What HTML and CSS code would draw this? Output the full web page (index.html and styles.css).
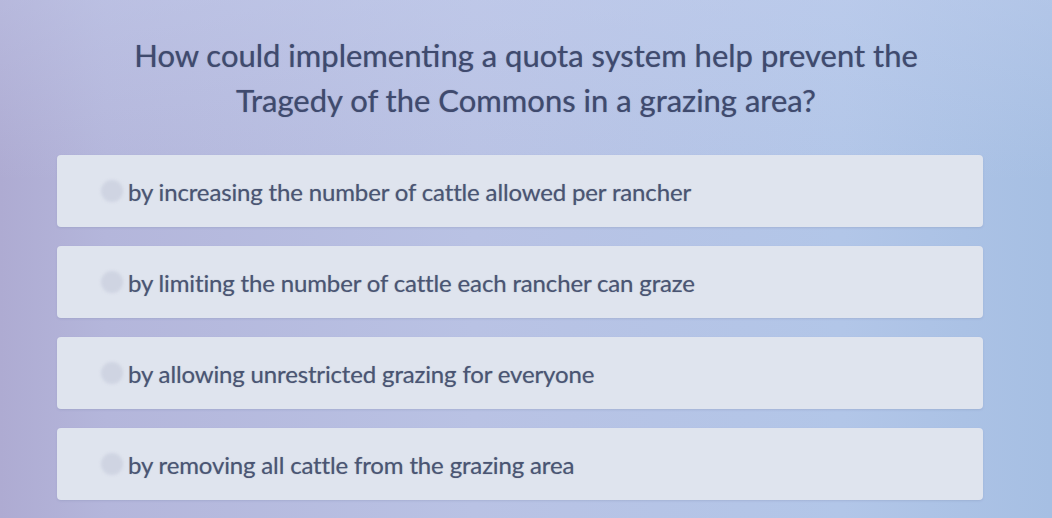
FILE: index.html
```html
<!DOCTYPE html>
<html>
<head>
<meta charset="utf-8">
<link rel="stylesheet" href="styles.css">
</head>
<body>
<div class="page">
  <h1 class="question">How could implementing a quota system help prevent the<br>Tragedy of the Commons in a grazing area?</h1>
  <div class="options">
    <div class="option"><span class="radio"></span><span class="label">by increasing the number of cattle allowed per rancher</span></div>
    <div class="option"><span class="radio"></span><span class="label">by limiting the number of cattle each rancher can graze</span></div>
    <div class="option"><span class="radio"></span><span class="label">by allowing unrestricted grazing for everyone</span></div>
    <div class="option"><span class="radio"></span><span class="label">by removing all cattle from the grazing area</span></div>
  </div>
</div>
</body>
</html>
```
FILE: styles.css
```css
html, body {
  margin: 0;
  padding: 0;
  height: 100%;
}
body {
  font-family: Lato, "Open Sans", sans-serif;
  background:
    linear-gradient(180deg, rgba(200, 210, 240, 0.35) 0%, rgba(200, 210, 240, 0) 35%),
    linear-gradient(90deg, #aeabd2 0%, #b4b6db 10%, #b9c2e4 45%, #b2c6e8 80%, #a6bfe3 100%);
  overflow: hidden;
}
.page {
  padding-top: 33px;
}
.question {
  margin: 0;
  text-align: center;
  font-size: 31px;
  line-height: 45px;
  font-weight: 400;
  color: #3f4a6e;
  text-shadow: 0 0 1px rgba(63, 74, 110, 0.6);
}
.options {
  margin-top: 32px;
  margin-left: 57px;
  width: 926px;
  display: flex;
  flex-direction: column;
  gap: 19px;
}
.option {
  height: 72px;
  background: #dfe4ee;
  border-radius: 4px;
  display: flex;
  align-items: center;
  box-shadow: 0 1px 2px rgba(120, 130, 170, 0.25);
}
.radio {
  width: 22px;
  height: 22px;
  border-radius: 50%;
  background: #cfd4e2;
  margin-left: 44px;
  flex: none;
  filter: blur(1.5px);
}
.label {
  margin-left: 5px;
  font-size: 24px;
  letter-spacing: -0.15px;
  color: #4a5573;
  text-shadow: 0 0 1px rgba(74, 85, 115, 0.5);
}
```
